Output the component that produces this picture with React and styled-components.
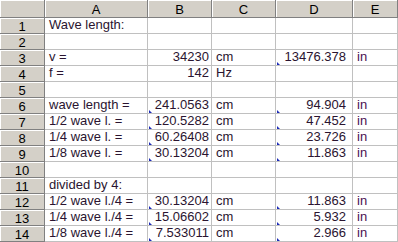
import React from "react";
import styled, { createGlobalStyle } from "styled-components";

const Global = createGlobalStyle`
  html, body { margin: 0; padding: 0; background: #fff; }
  body { font-family: "Liberation Sans", Arial, sans-serif; }
`;

const Sheet = styled.div`
  display: grid;
  grid-template-columns: 45px 103px 64px 64px 77px 1fr;
  grid-template-rows: 18px repeat(14, 16px);
  width: 398px;
  height: 242px;
  overflow: hidden;
  font-size: 13px;
`;

const Head = styled.div`
  background: #d4d0c8;
  border-right: 1px solid #808080;
  border-bottom: 1px solid #808080;
  box-shadow: inset 1px 1px 0 #ffffff;
  color: #000;
  display: flex;
  align-items: center;
  justify-content: center;
  line-height: 1;
  padding-top: 1px;
  box-sizing: border-box;
`;

const Cell = styled.div`
  position: relative;
  border-right: 1px solid #c0c0c0;
  border-bottom: 1px solid #c0c0c0;
  box-sizing: border-box;
  display: flex;
  align-items: flex-end;
  justify-content: ${(p) => (p.$right ? "flex-end" : "flex-start")};
  padding: 0 ${(p) => (p.$pr ?? 2)}px 1px 4px;
  color: ${(p) => (p.$purple ? "#4a1050" : "#2a1430")};
  white-space: nowrap;
  overflow: visible;
  line-height: 14px;
`;

const Mark = styled.span`
  position: absolute;
  left: 1px;
  bottom: 0px;
  width: 0;
  height: 0;
  border-left: 3px solid #1c2bb8;
  border-top: 3px solid transparent;
`;

const rows = [
  ["Wave length:", "", "", "", ""],
  ["", "", "", "", ""],
  ["v =", "34230", "cm", "13476.378", "in"],
  ["f =", "142", "Hz", "", ""],
  ["", "", "", "", ""],
  ["wave length =", "241.0563", "cm", "94.904", "in"],
  ["1/2 wave l. =", "120.5282", "cm", "47.452", "in"],
  ["1/4 wave l. =", "60.26408", "cm", "23.726", "in"],
  ["1/8 wave l. =", "30.13204", "cm", "11.863", "in"],
  ["", "", "", "", ""],
  ["divided by 4:", "", "", "", ""],
  ["1/2 wave l./4 =", "30.13204", "cm", "11.863", "in"],
  ["1/4 wave l./4 =", "15.06602", "cm", "5.932", "in"],
  ["1/8 wave l./4 =", "7.533011", "cm", "2.966", "in"],
];

const markB = new Set([6, 7, 8, 9, 12, 13, 14]);
const markD = new Set([3, 6, 7, 8, 9, 12, 13, 14]);

export default function App() {
  return (
    <>
      <Global />
      <Sheet>
        <Head />
        {["A", "B", "C", "D", "E"].map((c) => (
          <Head key={c}>{c}</Head>
        ))}
        {rows.map((r, i) => {
          const n = i + 1;
          return (
            <React.Fragment key={n}>
              <Head>{n}</Head>
              <Cell>{r[0]}</Cell>
              <Cell $right>
                {markB.has(n) && <Mark />}
                {r[1]}
              </Cell>
              <Cell>{r[2]}</Cell>
              <Cell $right $pr={6}>
                {markD.has(n) && <Mark />}
                {r[3]}
              </Cell>
              <Cell $purple>{r[4]}</Cell>
            </React.Fragment>
          );
        })}
      </Sheet>
    </>
  );
}
